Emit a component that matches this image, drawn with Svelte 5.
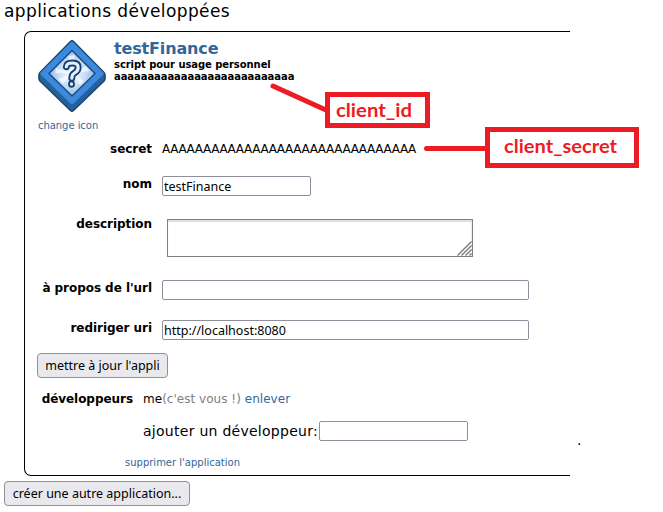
<script>
  const clientId = 'a'.repeat(27);
  const secret = 'A'.repeat(31);
  let name = $state('testFinance');
  let description = $state('');
  let about = $state('');
  let redirect = $state('http://localhost:8080');
  let developer = $state('');
</script>

<main>
  <h1>applications développées</h1>
  <section class="app">
    <header>
      <div class="icon-col">
        <svg class="icon" width="68" height="74" viewBox="0 0 68 74">
          <defs>
            <radialGradient id="glow" cx="50%" cy="50%" r="50%">
              <stop offset="0" stop-color="#f4faff" />
              <stop offset="0.5" stop-color="#cfe4f7" />
              <stop offset="1" stop-color="#8fbcea" />
            </radialGradient>
          </defs>
          <path d="M32.500 2.500Q34 1 35.500 2.500L66 33.500Q67 34.500 67 36V39.500Q67 41 66 42L35.500 71.500Q34 73 32.500 71.500L2 42Q1 41 1 39.500V36Q1 34.500 2 33.500Z" fill="#24619f" stroke="#1d456b" stroke-width="1.600" />
          <path d="M32.800 3.300Q34 2.200 35.200 3.300L66 34.300 64.800 36 35.500 64.500Q34 65.500 32.500 64.500L3.200 36 2 34.300Z" fill="#3c8ade" />
          <path d="M34 11.500 57 34.500 34 57 11 34.500Z" fill="url(#glow)" stroke="#1f4d80" stroke-width="1.500" />
          <path d="M34 34 30 17 37 16ZM34 34 18 29 17 34ZM34 34 48 27 52 32ZM34 34 20 40 25 45ZM34 34 46 42 42 46Z" fill="#fff" opacity=".65" />
          <path d="M28.300 27.800Q28.500 24 34.500 24 40.200 24 40.200 28.500 40.200 32 36.500 34 33.800 35.500 33.800 39.200M33.500 44.800V45.300" fill="none" stroke="#173e70" stroke-width="6.800" stroke-linecap="round" stroke-linejoin="round" />
          <path d="M28.300 27.800Q28.500 24 34.500 24 40.200 24 40.200 28.500 40.200 32 36.500 34 33.800 35.500 33.800 39.200M33.500 44.800V45.300" fill="none" stroke="#e4f0fc" stroke-width="3.100" stroke-linecap="round" stroke-linejoin="round" />
        </svg>
        <a class="small">change icon</a>
      </div>
      <div class="details">
        <h2>testFinance</h2>
        <h3>script pour usage personnel</h3>
        <h3>{clientId}</h3>
      </div>
    </header>

    <form>
      <div class="row secret"><label for="s">secret</label><span class="value" id="s">{secret}</span></div>
      <div class="row"><label for="n">nom</label><input id="n" class="short" bind:value={name} /></div>
      <div class="row desc">
        <label for="d">description</label>
        <div class="area">
          <textarea id="d" bind:value={description}></textarea>
          <svg class="grip" width="15" height="15" viewBox="0 0 15 15">
            <path d="M.5 14.500 14.500.5M4.500 14.500 14.500 4.500M8.500 14.500 14.500 8.500M12.500 14.500 14.500 12.500" stroke="#777" stroke-width="1.400" />
          </svg>
        </div>
      </div>
      <div class="row"><label for="u">à propos de l'url</label><input id="u" class="long" bind:value={about} /></div>
      <div class="row redirect"><label for="r">rediriger uri</label><input id="r" class="long" bind:value={redirect} /></div>
      <button type="button" class="update">mettre à jour l'appli</button>
    </form>

    <div class="developers">
      <b>développeurs</b>
      <div>
        <p class="me">me<span class="you">(c'est vous !)</span> <a>enlever</a></p>
        <div class="add"><span>ajouter un développeur:</span><input class="short" bind:value={developer} /></div>
      </div>
    </div>
    <a class="small delete">supprimer l'application</a>
  </section>
  <button type="button" class="create">créer une autre application...</button>

  <span class="dot">.</span>
  <svg class="notes" width="663" height="512" viewBox="0 0 663 512">
    <g fill="none" stroke="#ed1c24" stroke-width="5">
      <path d="M273 86 327 110.500M426.500 148.500H487" stroke-linecap="round" />
      <path d="M327.500 94.500H427.500V125.500H327.500ZM487.500 129.500H636.500V165.500H487.500Z" />
    </g>
    <g fill="#ed1c24" font-family="Lato, sans-serif" font-weight="700" font-size="18.500">
      <text x="336" y="117" textLength="76" lengthAdjust="spacingAndGlyphs">client_id</text>
      <text x="504" y="153" textLength="113" lengthAdjust="spacingAndGlyphs">client_secret</text>
    </g>
  </svg>
</main>

<style>
  :global(body) { background: #fff; }
  main {
    position: relative;
    width: 663px;
    height: 512px;
    overflow: hidden;
    box-sizing: border-box;
    padding-left: 4px;
    font: 12px/16px Verdana, 'DejaVu Sans', sans-serif;
    color: #000;
    white-space: nowrap;
  }
  main * { box-sizing: border-box; }
  h1, h2, h3, p { margin: 0; }
  h1 { height: 31px; font-size: 17px; font-weight: 400; line-height: 22px; letter-spacing: .41px; }
  .app {
    width: 546px;
    height: 445px;
    margin-left: 20px;
    border: 1px solid #000;
    border-right: 0;
    border-radius: 7px 0 0 7px;
  }
  header { display: flex; height: 109px; padding: 7px 0 0 12px; }
  .icon-col { display: flex; flex-direction: column; width: 77px; }
  .icon { margin-left: 1px; }
  .small { font-size: 10px; line-height: 14px; color: #369; }
  .icon-col .small { margin: 6px 0 0 1px; letter-spacing: -.05px; }
  a { color: #369; }
  h2 { font-size: 16px; line-height: 20px; color: #369; letter-spacing: -.15px; }
  h3 { font-size: 10px; line-height: 12px; letter-spacing: -.07px; }
  .row { display: grid; grid-template-columns: 127px auto; column-gap: 10px; justify-content: start; align-items: start; height: 40px; }
  .row.secret { height: 35px; }
  .row.desc { height: 64px; }
  .row.redirect { height: 33px; }
  .value { letter-spacing: -.34px; }
  label { text-align: right; font-weight: 700; letter-spacing: -.05px; }
  input, textarea, button { font: 12.500px/16px 'Noto Sans', sans-serif; margin: 0; color: #000; }
  input { height: 20px; padding: 1px; border: 1px solid #8f8f9d; border-radius: 2px; background: #fff; outline: 0; }
  .short { width: 149px; }
  .long { width: 367px; }
  .area { position: relative; width: 306px; height: 38px; margin: 3px 0 0 5px; }
  textarea {
    display: block;
    width: 100%;
    height: 100%;
    border: 1px solid #808080;
    resize: none;
    overflow: hidden;
    background: #fff;
    box-shadow: inset 0 2px 1px #ddd, inset -1px 0 #eee;
  }
  .grip { position: absolute; right: 1px; bottom: 1px; }
  button { height: 25px; padding: 0; border: 1px solid #8f8f9d; border-radius: 4px; background: #e9e9ed; }
  .update { display: block; width: 131px; margin-left: 12px; }
  .developers { display: flex; gap: 10px; height: 65px; margin-top: 13px; }
  .developers b { width: 108px; text-align: right; letter-spacing: -.05px; }
  .me { height: 30px; letter-spacing: .03px; }
  .you { color: gray; }
  .add { display: flex; gap: 1px; font-size: 14px; line-height: 20px; letter-spacing: .27px; }
  .add span { width: 175px; }
  .delete { display: block; margin-left: 100px; }
  .create { display: block; width: 186px; margin-top: 5px; }
  .dot { position: absolute; left: 577px; top: 432px; font-size: 14px; }
  .notes { position: absolute; inset: 0; pointer-events: none; }
</style>
